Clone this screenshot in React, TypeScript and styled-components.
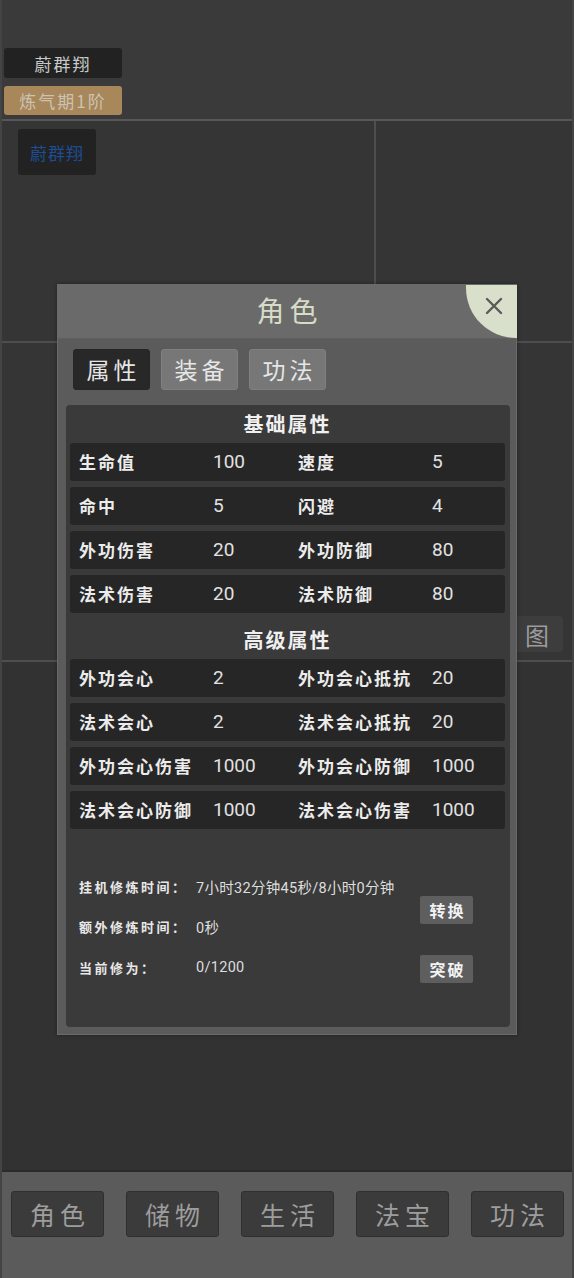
import React from "react";
import styled, { createGlobalStyle } from "styled-components";

const Global = createGlobalStyle`
  html, body { margin: 0; padding: 0; background: #363636; }
  body { font-family: "Noto Sans CJK SC", "Noto Sans", sans-serif; }
  * { box-sizing: border-box; }
`;

const CJK = `"Noto Sans CJK SC", "Noto Sans", sans-serif`;
const NUM = `Roboto, "Noto Sans CJK SC", sans-serif`;

const Page = styled.div`
  position: relative;
  width: 574px;
  height: 1278px;
  display: flex;
  flex-direction: column;
  background: #363636;
  border-left: 2px solid #444;
  border-right: 2px solid #444;
  overflow: hidden;
`;

const TopBar = styled.div`
  height: 121px;
  padding: 48px 0 0 2px;
  background: #3a3a3a;
  border-bottom: 2px solid #575757;
  display: flex;
  flex-direction: column;
  gap: 8px;
`;

const Tag = styled.div<{ $bg: string; $color: string; $h: number }>`
  width: 118px;
  height: ${(p) => p.$h}px;
  background: ${(p) => p.$bg};
  color: ${(p) => p.$color};
  border-radius: 3px;
  display: flex;
  align-items: center;
  justify-content: center;
  font-family: ${CJK};
  font-size: 17px;
  letter-spacing: 2px;
`;

const MapRow = styled.div`
  display: grid;
  grid-template-columns: 372px 1fr;
  height: 222px;
  border-bottom: 2px solid #4e4e4e;
`;

const Cell = styled.div<{ $right?: boolean }>`
  background: #353535;
  border-left: ${(p) => (p.$right ? "2px solid #4e4e4e" : "none")};
  padding: 8px 0 0 16px;
`;

const PlayerCard = styled.div`
  width: 78px;
  height: 46px;
  background: #222;
  border-radius: 3px;
  display: flex;
  align-items: center;
  justify-content: center;
  color: #1d4d92;
  font-family: ${CJK};
  font-size: 17px;
  letter-spacing: 1px;
`;

const MidRow = styled.div`
  height: 319px;
  background: #353535;
  border-bottom: 2px solid #4e4e4e;
  display: flex;
  align-items: flex-end;
  justify-content: flex-end;
  padding: 0 9px 8px 0;
`;

const SideButton = styled.div`
  height: 36px;
  padding: 0 6px 0 14px;
  background: #3d3d3d;
  border-radius: 4px;
  display: flex;
  align-items: center;
  color: #9c9c9c;
  font-family: ${CJK};
  font-size: 24px;
  letter-spacing: 8px;
`;

const LowArea = styled.div`
  flex: 1;
  background: #323232;
  border-bottom: 2px solid #2a2a2a;
`;

const BottomNav = styled.div`
  height: 106px;
  background: #5b5b5b;
  display: flex;
  gap: 22px;
  padding: 19px 0 0 9px;
`;

const NavButton = styled.div`
  width: 93px;
  height: 46px;
  background: #3b3b3b;
  border: 1px solid #2f2f2f;
  border-radius: 3px;
  display: flex;
  align-items: center;
  justify-content: center;
  color: #9d9d9d;
  font-family: ${CJK};
  font-size: 25px;
  letter-spacing: 5px;
  padding-left: 5px;
`;

/* Modal */
const Modal = styled.div`
  position: absolute;
  left: 55px;
  top: 284px;
  width: 460px;
  height: 751px;
  background: #5b5b5b;
  border: 1px solid #6a6a6a;
  display: flex;
  flex-direction: column;
  box-shadow: 0 0 4px rgba(0, 0, 0, 0.35);
`;

const Header = styled.div`
  position: relative;
  height: 54px;
  background: #6a6a6a;
  display: flex;
  align-items: center;
  justify-content: center;
  color: #d6dcc6;
  font-family: ${CJK};
  font-size: 28px;
  letter-spacing: 5px;
  padding: 0 0 3px 5px;
  border-bottom: 1px solid #5f5f5f;
`;

const CloseBtn = styled.div`
  position: absolute;
  right: -1px;
  top: 0;
  width: 51px;
  height: 53px;
  background: #d8dfca;
  border-bottom-left-radius: 50px;
  display: flex;
  align-items: flex-start;
  justify-content: flex-end;
  padding: 11px 13px 0 0;
`;

const Tabs = styled.div`
  display: flex;
  gap: 11px;
  padding: 10px 0 0 15px;
  height: 52px;
`;

const Tab = styled.div<{ $active?: boolean }>`
  width: 77px;
  height: 41px;
  border-radius: 3px;
  background: ${(p) => (p.$active ? "#282828" : "#777777")};
  border: 1px solid ${(p) => (p.$active ? "#262626" : "#7f7f7f")};
  color: #e6e6e6;
  display: flex;
  align-items: center;
  justify-content: center;
  font-family: ${CJK};
  font-size: 23px;
  letter-spacing: 4px;
  padding: 0 0 2px 4px;
`;

const Panel = styled.div`
  margin: 14px 6px 7px 8px;
  flex: 1;
  background: #3a3a3a;
  border-radius: 4px;
  padding: 0 5px 0 4px;
  display: flex;
  flex-direction: column;
`;

const SectionTitle = styled.div<{ $pt: number; $h: number }>`
  height: ${(p) => p.$h}px;
  padding-top: ${(p) => p.$pt}px;
  line-height: 36px;
  text-align: center;
  color: #f0f0f0;
  font-family: ${CJK};
  font-weight: 700;
  font-size: 20px;
  letter-spacing: 2px;
`;

const Rows = styled.div`
  display: flex;
  flex-direction: column;
  gap: 6px;
`;

const StatRow = styled.div`
  height: 38px;
  background: #262626;
  border-radius: 3px;
  display: grid;
  grid-template-columns: 134px 85px 134px 1fr;
  align-items: center;
  padding: 0 0 2px 9px;
`;

const Label = styled.span`
  color: #ececec;
  font-family: ${CJK};
  font-weight: 700;
  font-size: 17px;
  letter-spacing: 2px;
  white-space: nowrap;
`;

const Value = styled.span`
  color: #e2e2e2;
  font-family: ${NUM};
  font-size: 19px;
`;

const InfoArea = styled.div`
  display: grid;
  grid-template-columns: 1fr 53px;
  padding: 37px 32px 0 9px;
`;

const InfoList = styled.div`
  display: flex;
  flex-direction: column;
`;

const InfoLine = styled.div`
  height: 40.5px;
  display: grid;
  grid-template-columns: 117px 1fr;
  align-items: center;
`;

const InfoLabel = styled.span`
  color: #e8e8e8;
  font-family: ${CJK};
  font-weight: 700;
  font-size: 13px;
  letter-spacing: 2.5px;
  white-space: nowrap;
`;

const InfoValue = styled.span`
  color: #dedede;
  font-family: ${NUM};
  font-size: 14.5px;
  letter-spacing: 0.3px;
  white-space: nowrap;
`;

const ActionCol = styled.div`
  display: flex;
  flex-direction: column;
  gap: 31px;
  padding-top: 30px;
`;

const ActionBtn = styled.div`
  width: 53px;
  height: 28px;
  background: #5e5e5e;
  border-radius: 2px;
  display: flex;
  align-items: center;
  justify-content: center;
  color: #f2f2f2;
  font-family: ${CJK};
  font-weight: 700;
  font-size: 16px;
  letter-spacing: 2px;
  padding-left: 2px;
`;

const basic: [string, string, string, string][] = [
  ["生命值", "100", "速度", "5"],
  ["命中", "5", "闪避", "4"],
  ["外功伤害", "20", "外功防御", "80"],
  ["法术伤害", "20", "法术防御", "80"],
];

const advanced: [string, string, string, string][] = [
  ["外功会心", "2", "外功会心抵抗", "20"],
  ["法术会心", "2", "法术会心抵抗", "20"],
  ["外功会心伤害", "1000", "外功会心防御", "1000"],
  ["法术会心防御", "1000", "法术会心伤害", "1000"],
];

const info: [string, string][] = [
  ["挂机修炼时间：", "7小时32分钟45秒/8小时0分钟"],
  ["额外修炼时间：", "0秒"],
  ["当前修为：", "0/1200"],
];

const navItems = ["角色", "储物", "生活", "法宝", "功法"];

function StatRows({ data }: { data: [string, string, string, string][] }) {
  return (
    <Rows>
      {data.map((r) => (
        <StatRow key={r[0]}>
          <Label>{r[0]}</Label>
          <Value>{r[1]}</Value>
          <Label>{r[2]}</Label>
          <Value>{r[3]}</Value>
        </StatRow>
      ))}
    </Rows>
  );
}

export default function App() {
  return (
    <>
      <Global />
      <Page>
        <TopBar>
          <Tag $bg="#222222" $color="#c9c9c9" $h={30}>
            蔚群翔
          </Tag>
          <Tag $bg="#a8875a" $color="#cbc3b4" $h={29}>
            炼气期1阶
          </Tag>
        </TopBar>
        <MapRow>
          <Cell>
            <PlayerCard>蔚群翔</PlayerCard>
          </Cell>
          <Cell $right />
        </MapRow>
        <MidRow>
          <SideButton>地图</SideButton>
        </MidRow>
        <LowArea />
        <BottomNav>
          {navItems.map((n) => (
            <NavButton key={n}>{n}</NavButton>
          ))}
        </BottomNav>

        <Modal>
          <Header>
            角色
            <CloseBtn>
              <svg width="20" height="20" viewBox="0 0 20 20">
                <path d="M3 3 L17 17 M17 3 L3 17" stroke="#5a5a5a" strokeWidth="2.4" strokeLinecap="round" />
              </svg>
            </CloseBtn>
          </Header>
          <Tabs>
            <Tab $active>属性</Tab>
            <Tab>装备</Tab>
            <Tab>功法</Tab>
          </Tabs>
          <Panel>
            <SectionTitle $pt={1} $h={38}>基础属性</SectionTitle>
            <StatRows data={basic} />
            <SectionTitle $pt={9} $h={46}>高级属性</SectionTitle>
            <StatRows data={advanced} />
            <InfoArea>
              <InfoList>
                {info.map((i) => (
                  <InfoLine key={i[0]}>
                    <InfoLabel>{i[0]}</InfoLabel>
                    <InfoValue>{i[1]}</InfoValue>
                  </InfoLine>
                ))}
              </InfoList>
              <ActionCol>
                <ActionBtn>转换</ActionBtn>
                <ActionBtn>突破</ActionBtn>
              </ActionCol>
            </InfoArea>
          </Panel>
        </Modal>
      </Page>
    </>
  );
}
